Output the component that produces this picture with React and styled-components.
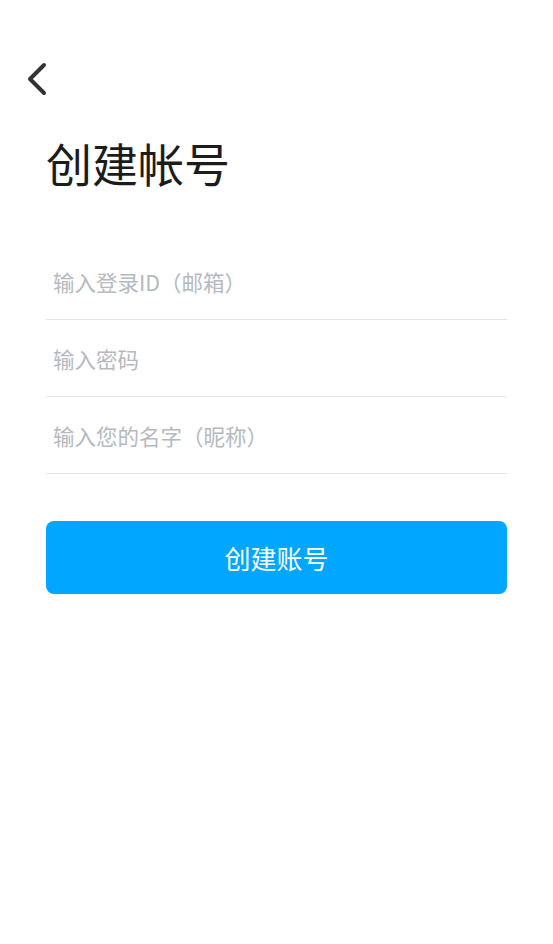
import styled, { createGlobalStyle } from "styled-components";

const GlobalStyle = createGlobalStyle`
    * {
        box-sizing: border-box;
    }
    body {
        margin: 0;
        background: #ffffff;
        font-family: "Noto Sans CJK SC", "Noto Sans", sans-serif;
    }
`;

const Container = styled.div`
    width: 553px;
    min-height: 944px;
    background: #ffffff;
`;

const Header = styled.div`
    height: 130px;
    padding-top: 60px;
    padding-left: 19px;
`;

const BackButton = styled.button`
    width: 36px;
    height: 38px;
    padding: 0;
    border: none;
    background: transparent;
    display: flex;
    align-items: center;
    justify-content: center;
    cursor: pointer;
`;

const Wrapper = styled.div`
    padding: 0 46px;
`;

const Title = styled.h1`
    margin: 0;
    font-size: 46px;
    font-weight: 400;
    line-height: 64px;
    color: #1c1c1c;
`;

const Form = styled.div`
    margin-top: 49px;
    display: flex;
    flex-direction: column;
`;

const Input = styled.input`
    height: 77px;
    width: 100%;
    padding: 0 7px;
    border: none;
    border-bottom: 1px solid #e3e4e6;
    outline: none;
    font-family: inherit;
    font-size: 21.5px;
    color: #333;
    background: transparent;

    &::placeholder {
        color: #b5b9c0;
    }
`;

const Button = styled.button`
    margin-top: 47px;
    width: 100%;
    height: 73px;
    border: none;
    border-radius: 8px;
    background-color: #00a6ff;
    color: #ffffff;
    font-family: inherit;
    font-size: 26px;
    cursor: pointer;
`;

const BackIcon = () => (
    <svg width="24" height="34" viewBox="0 0 24 34">
        <path
            d="M19 3 L5 17 L19 31"
            fill="none"
            stroke="#333333"
            strokeWidth="4"
            strokeLinecap="round"
            strokeLinejoin="round"
        />
    </svg>
);

const App = () => {
    return (
        <Container>
            <GlobalStyle />
            <Header>
                <BackButton aria-label="返回">
                    <BackIcon />
                </BackButton>
            </Header>
            <Wrapper>
                <Title>创建帐号</Title>
                <Form>
                    <Input placeholder="输入登录ID（邮箱）" />
                    <Input type="password" placeholder="输入密码" />
                    <Input placeholder="输入您的名字（昵称）" />
                </Form>
                <Button>创建账号</Button>
            </Wrapper>
        </Container>
    );
};

export default App;
